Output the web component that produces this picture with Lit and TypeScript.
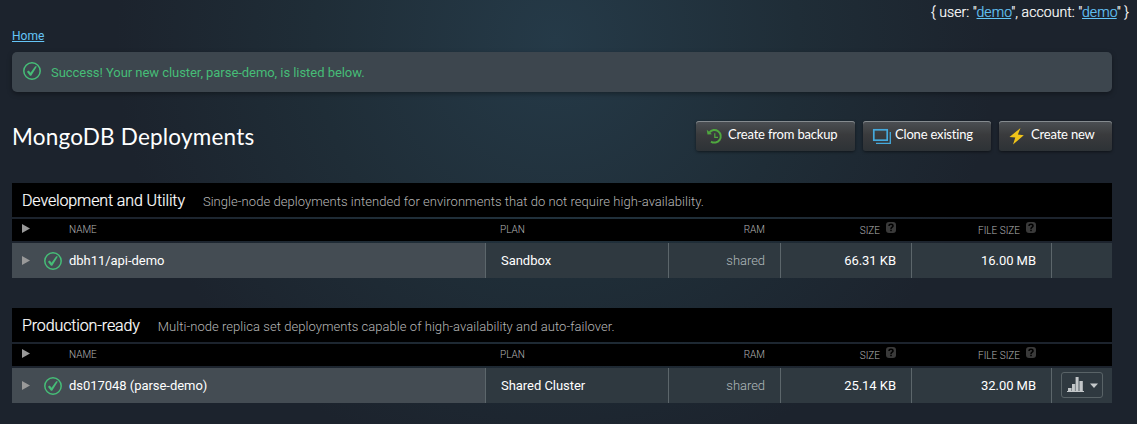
import { LitElement, html, css, nothing } from "lit";
import { customElement, property } from "lit/decorators.js";

interface Deployment {
  name: string;
  plan: string;
  ram: string;
  size: string;
  fileSize: string;
  menu: boolean;
}

const checkIcon = html`<svg class="check" width="18" height="18" viewBox="0 0 18 18">
  <circle cx="9" cy="9" r="8.2" fill="none" stroke="#46bd77" stroke-width="1.5" />
  <path d="M3.9 9.7 L5.8 8.6 L7.5 10.8 L12.2 4.2 L13.9 4.5 L8.2 13.8 L7 13.8 Z" fill="#46bd77" />
</svg>`;

const arrowIcon = html`<svg class="arrow" width="8" height="9" viewBox="0 0 8 9">
  <path d="M0 0 L8 4.5 L0 9 Z" fill="currentColor" />
</svg>`;

@customElement("deployment-table")
export class DeploymentTable extends LitElement {
  @property() heading = "";
  @property() summary = "";
  @property({ attribute: false }) row!: Deployment;

  static styles = css`
    :host { display: grid; grid-template-rows: 34px 22px 35px; row-gap: 2px; font-size: 13px; }
    .title { display: flex; align-items: baseline; background: #000; padding: 8px 10px 0; line-height: 20px; }
    .heading { font-size: 16px; color: #fff; letter-spacing: -0.12px; font-weight: 300; margin-right: 18px; white-space: nowrap; -webkit-text-stroke: 0.2px #fff; }
    .summary { color: #b8b8b8; font-weight: 300; letter-spacing: 0.05px; white-space: nowrap; }
    .grid { display: grid; grid-template-columns: 473px 183px 112px 131px 140px 61px; }
    .head { background: #000; color: #b4b4b4; font-size: 10px; font-weight: 300; line-height: 21px; }
    .cell { display: flex; align-items: center; padding: 0 15px; white-space: nowrap; }
    .head .cell { align-items: flex-start; }
    .right { justify-content: flex-end; }
    .body { color: #fff; background: #2f3940; line-height: 35px; letter-spacing: -0.04px; }
    .body .cell { border-left: 1px solid #5c666b; padding-right: 15px; }
    .body .cell.first { border-left: 0; background: #444c53; }
    .cell.first { padding-left: 10px; }
    .body .muted { color: #b2b9bd; font-weight: 300; }
    .arrow { color: #999; margin-right: 39px; }
    .head .arrow { margin-top: 5px; }
    .body .arrow { margin-right: 14px; margin-bottom: 1px; }
    .check { margin-right: 7px; }
    .help { margin: 3px 0 0 6px; }
    .label { padding-top: 1px; }
    .body .menu { padding: 0 0 0 9px; }
    .drop { box-sizing: border-box; width: 42px; height: 26px; margin-bottom: 1px; border: 1px solid #596367; border-radius: 3px; display: flex; align-items: center; padding-left: 4px; }
  `;

  private help() {
    return html`<svg class="help" width="10" height="11" viewBox="0 0 10 11">
      <rect width="10" height="11" rx="3" fill="#3a3a3a" />
      <path d="M3 4 C3 1.7 7 1.7 7 4 C7 5.3 5 5.2 5 7" fill="none" stroke="#000" stroke-width="1.5" />
      <rect x="4.2" y="7.7" width="1.6" height="1.5" fill="#000" />
    </svg>`;
  }

  render() {
    const r = this.row;
    return html`
      <div class="title"><span class="heading">${this.heading}</span><span class="summary">${this.summary}</span></div>
      <div class="grid head">
        <div class="cell first">${arrowIcon}<span>NAME</span></div>
        <div class="cell">PLAN</div>
        <div class="cell right">RAM</div>
        <div class="cell right"><span class="label">SIZE</span>${this.help()}</div>
        <div class="cell right"><span class="label">FILE SIZE</span>${this.help()}</div>
        <div class="cell"></div>
      </div>
      <div class="grid body">
        <div class="cell first">${arrowIcon}${checkIcon}<span>${r.name}</span></div>
        <div class="cell">${r.plan}</div>
        <div class="cell right muted">${r.ram}</div>
        <div class="cell right">${r.size}</div>
        <div class="cell right">${r.fileSize}</div>
        <div class="cell menu">${r.menu
          ? html`<div class="drop"><svg width="34" height="16" viewBox="0 0 34 16">
              <path d="M1 14h17v1H1ZM2 11h3v3H2Z M6 7h3v7H6Z M9.6 0h3v14h-3Z M13.4 4h3.4v10h-3.4Z" fill="#c3c7c9" />
              <path d="M5.5 11v3M9.3 7v7M13 4v10" stroke="#8d9498" stroke-width="0.9" />
              <path d="M24 6.5h8l-4 4.5Z" fill="#c5c9cb" />
            </svg></div>`
          : nothing}</div>
      </div>
    `;
  }
}

@customElement("app-root")
export class AppRoot extends LitElement {
  static styles = css`
    :host {
      display: block; box-sizing: border-box; width: 1137px; height: 424px; overflow: hidden;
      font-family: Roboto, "Liberation Sans", sans-serif; font-size: 13px; color: #fff;
      background: radial-gradient(ellipse 440px 440px at 556px 40px, #253a48 0%, #1f2d37 55%, #1c232d 100%);
    }
    a { color: #65c5f7; text-decoration: underline; }
    .user { height: 26px; padding-right: 8px; text-align: right; font-size: 14px; letter-spacing: 0.08px; line-height: 25px; font-weight: 300; color: #fff; -webkit-text-stroke: 0.2px currentColor; }
    .page { padding: 0 25px 0 12px; }
    .crumb { height: 26px; line-height: 20px; font-size: 12px; }
    .notice { display: flex; align-items: center; height: 40px; border-radius: 5px; background: #3d464e; color: #46bd77; letter-spacing: -0.05px; box-shadow: 0 2px 5px rgba(0, 0, 0, 0.35); padding-left: 11px; }
    .notice svg { margin: 0 10px 2px 0; }
    .bar { display: flex; align-items: flex-start; justify-content: space-between; padding-top: 29px; height: 62px; }
    .name { margin: 0; font: 400 22.5px/31px Lato, sans-serif; letter-spacing: 0.2px; }
    .buttons { display: flex; gap: 8px; }
    .button { box-sizing: border-box; display: flex; align-items: flex-start; height: 30px; font: 400 13px/27px Lato, sans-serif; letter-spacing: -0.18px; color: #fff; border: 0; border-radius: 3px; padding: 0; background: linear-gradient(#4c5054, #3a3b3d 45%, #2d3236); box-shadow: inset 0 1px 0 #858b8f, 0 1px 3px rgba(0, 0, 0, 0.5); white-space: nowrap; }
    .backup { width: 159px; }
    .clone { width: 128px; }
    .new { width: 113px; }
    .button svg { flex: none; width: 32px; height: 30px; }
    deployment-table + deployment-table { margin-top: 30px; }
  `;

  render() {
    return html`
      <div class="user">{ user: "<a>demo</a>", account: "<a>demo</a>" }</div>
      <div class="page">
        <div class="crumb"><a>Home</a></div>
        <div class="notice">${checkIcon}<span>Success! Your new cluster, parse-demo, is listed below.</span></div>
        <div class="bar">
          <h1 class="name">MongoDB Deployments</h1>
          <div class="buttons">
            <button class="button backup"><svg viewBox="0 0 32 30">
              <path d="M13.4 11.5 A6.3 6.3 0 1 1 15 20.6" fill="none" stroke="#4fa83f" stroke-width="2" />
              <path d="M10.8 8.7 L11.5 13.6 L16 13.3 Z" fill="#4fa83f" />
              <path d="M18.8 12.3v4h3.2" fill="none" stroke="#4fa83f" stroke-width="1.2" />
            </svg><span>Create from backup</span></button>
            <button class="button clone"><svg viewBox="0 0 32 30">
              <rect x="10.8" y="8.8" width="13.4" height="10.4" fill="none" stroke="#45a9dc" stroke-width="1.7" />
              <path d="M13 22.3H27.3V11" fill="none" stroke="#45a9dc" stroke-width="1.3" />
            </svg><span>Clone existing</span></button>
            <button class="button new"><svg viewBox="0 0 32 30">
              <path d="M21.5 7 L10.5 16 L16.3 16.5 L14 23.5 L24.8 14.3 L18.9 13.6 Z" fill="#f0c419" />
            </svg><span>Create new</span></button>
          </div>
        </div>
        <deployment-table
          heading="Development and Utility"
          summary="Single-node deployments intended for environments that do not require high-availability."
          .row=${{ name: "dbh11/api-demo", plan: "Sandbox", ram: "shared", size: "66.31 KB", fileSize: "16.00 MB", menu: false }}
        ></deployment-table>
        <deployment-table
          heading="Production-ready"
          summary="Multi-node replica set deployments capable of high-availability and auto-failover."
          .row=${{ name: "ds017048 (parse-demo)", plan: "Shared Cluster", ram: "shared", size: "25.14 KB", fileSize: "32.00 MB", menu: true }}
        ></deployment-table>
      </div>
    `;
  }
}
